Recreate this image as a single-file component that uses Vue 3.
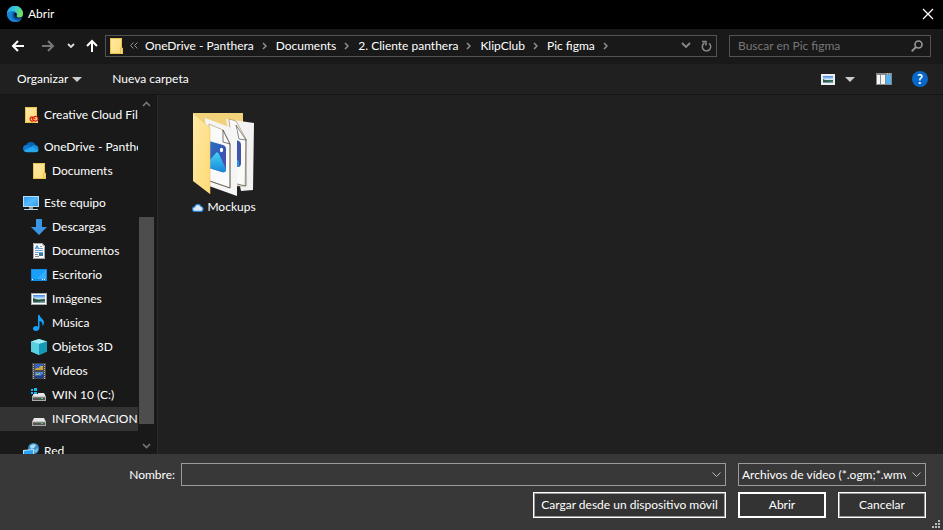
<script setup>
import { ref } from 'vue'

const crumbs = ['OneDrive - Panthera', 'Documents', '2. Cliente panthera', 'KlipClub', 'Pic figma']

const groups = [
  [{ label: 'Creative Cloud Files', icon: 'creative' }],
  [
    { label: 'OneDrive - Panthera', icon: 'onedrive' },
    { label: 'Documents', icon: 'folder', child: true },
  ],
  [
    { label: 'Este equipo', icon: 'computer' },
    { label: 'Descargas', icon: 'download', child: true },
    { label: 'Documentos', icon: 'document', child: true },
    { label: 'Escritorio', icon: 'desktop', child: true },
    { label: 'Imágenes', icon: 'picture', child: true },
    { label: 'Música', icon: 'music', child: true },
    { label: 'Objetos 3D', icon: 'cube', child: true },
    { label: 'Vídeos', icon: 'film', child: true },
    { label: 'WIN 10 (C:)', icon: 'windrive', child: true },
    { label: 'INFORMACION (D:)', icon: 'drive', child: true },
  ],
  [{ label: 'Red', icon: 'network' }],
]

const selected = ref('INFORMACION (D:)')
const fileName = ref('')
const search = ref('')
</script>

<template>
  <svg class="sprite" width="0" height="0" aria-hidden="true">
    <defs>
      <linearGradient id="gFolder" x1="0" y1="0" x2="1" y2="1">
        <stop offset="0" stop-color="#ffe9a6" /><stop offset="1" stop-color="#ffdb76" />
      </linearGradient>
      <linearGradient id="gScreen" x1="0" y1="0" x2="1" y2="1">
        <stop offset="0" stop-color="#2f9df0" /><stop offset=".5" stop-color="#55bbff" /><stop offset="1" stop-color="#2a9cf2" />
      </linearGradient>
      <linearGradient id="gSky" x1="0" y1="0" x2="0" y2="1">
        <stop offset="0" stop-color="#3f86e0" /><stop offset=".5" stop-color="#d4ecfa" /><stop offset=".62" stop-color="#39684f" /><stop offset="1" stop-color="#7fa9c4" />
      </linearGradient>
      <linearGradient id="gPhoto" x1="0" y1="0" x2="1" y2="1">
        <stop offset="0" stop-color="#2d70c8" /><stop offset=".6" stop-color="#3457b4" /><stop offset="1" stop-color="#6945a8" />
      </linearGradient>
      <linearGradient id="gHill" x1="0" y1="0" x2="0" y2="1">
        <stop offset="0" stop-color="#45d4f4" /><stop offset="1" stop-color="#1785dc" />
      </linearGradient>
      <linearGradient id="gEdgeTop" x1="0" y1="0" x2="1" y2=".4">
        <stop offset="0" stop-color="#1f9de0" /><stop offset=".5" stop-color="#35c7dd" /><stop offset="1" stop-color="#74e05c" />
      </linearGradient>
    </defs>
    <symbol id="i-folder" viewBox="0 0 16 16">
      <path d="M2 0h12v10h1v6H2z" fill="url(#gFolder)" /><path d="M2.500.5h11v9.500M2.500.5v15h12v-5.500h-2v5" fill="none" stroke="#e9c14c" />
    </symbol>
    <symbol id="i-creative" viewBox="0 0 16 16">
      <path d="M2 0h12v10h1v6H2z" fill="url(#gFolder)" /><path d="M2.500.5h11v8M2.500.5v15h10" fill="none" stroke="#e9c14c" />
      <g fill="none" stroke="#dc1c12" stroke-width="1.200"><path d="M10.500 13.800a2.200 2.200 0 1 1-1.600-4c1 0 1.800.5 3.600 2.400M8.800 12l2.200-2a2.400 2.400 0 1 1 1.800 4.200c-1.200 0-1.800-.5-3.600-2.400" /></g>
    </symbol>
    <symbol id="i-onedrive" viewBox="0 0 16 16">
      <path d="M3 7a5 5 0 0 1 9.600-.6L9 11z" fill="#0364b8" />
      <path d="M3.600 13A3.700 3.700 0 0 1 0 9.500 3.500 3.500 0 0 1 3.600 6q2 0 3.500 1L12 12z" fill="#0f78d4" />
      <path d="M8 8.500a4.200 4.200 0 0 1 5-2.200A3.500 3.500 0 0 1 13 13H9z" fill="#1490df" />
      <path d="M.8 11.600L9 7.800l6.600 3.700A3 3 0 0 1 13 13.200H3.600a3.500 3.500 0 0 1-2.800-1.600z" fill="#28a8ea" />
    </symbol>
    <symbol id="i-computer" viewBox="0 0 16 16">
      <path d="M0 1h16v11H0z" fill="#bddcf0" /><path d="M1 2h14v9H1z" fill="url(#gScreen)" />
      <path d="M6 12h4v2H6z" fill="#8da0ac" /><path d="M1 14h14v1H1z" fill="#c2d4df" />
    </symbol>
    <symbol id="i-download" viewBox="0 0 16 16">
      <path d="M5 0h6v8h5l-8 8-8-8h5z" fill="#3a96e4" />
    </symbol>
    <symbol id="i-document" viewBox="0 0 16 16">
      <path d="M2 0h9l3 3v13H2z" fill="#fafafa" /><path d="M2.500.5h8l3 3v12h-11z" fill="none" stroke="#a5a5a5" />
      <path d="M4.500 6L6 2.500 7.500 6M4.500 5h3" fill="none" stroke="#2c80c8" stroke-width=".9" />
      <path d="M9 3.500h2M8 5.500h4M4 7.500h8M4 9.500h8" stroke="#5a9ccc" fill="none" stroke-width=".9" />
      <path d="M4 11.500h3M4 13.500h4" stroke="#888" fill="none" /><path d="M8 10h4v3H8z" fill="#377c9d" />
    </symbol>
    <symbol id="i-desktop" viewBox="0 0 16 16">
      <path d="M0 2h16v12H0z" fill="#168be4" /><path d="M1 3h14v9H1z" fill="#18a0fc" /><path d="M15 3v9H6z" fill="#36aeff" /><path d="M1 12.500h2M11 12.500h4" stroke="#fff" stroke-dasharray="1 1" />
    </symbol>
    <symbol id="i-picture" viewBox="0 0 16 16">
      <path d="M0 2h16v12H0z" fill="#aaa" /><path d="M1 3h14v10H1z" fill="#fff" /><path d="M2 4h12v8H2z" fill="url(#gSky)" /><path d="M2 7l5 2 7-1v1.500L6 11l-4-.5z" fill="#28543b" />
    </symbol>
    <symbol id="i-music" viewBox="0 0 16 16">
      <path d="M7 0h1.500c.5 3 4.500 4 4.500 7.500 0 1.500-.5 2.500-1.500 3.500.5-3-1-4.500-3-5v6.500C8.500 14.500 7 16 5 16S2 15 2 13.500 3.500 11 5.200 11q1 0 1.800.5z" fill="#18a0fc" />
    </symbol>
    <symbol id="i-cube" viewBox="0 0 16 16">
      <path d="M0 2.500L8 0l8 2.500v10L8 16 0 12.500z" fill="#35b9cd" /><path d="M0 2.500L8 0l8 2.500L8 5z" fill="#a5edf5" /><path d="M0 2.500L8 5v11l-8-3.500z" fill="#5ad0df" /><path d="M8 5l8-2.500v10L8 16z" fill="#1699b6" />
    </symbol>
    <symbol id="i-film" viewBox="0 0 16 16">
      <path d="M1 0h14v16H1z" fill="#4a4a4a" /><path d="M2.500 1v15M13.500 1v15" stroke="#b9b9b9" stroke-dasharray="1 1" />
      <path d="M4 1h8v6H4z" fill="#3464c4" /><path d="M4 6l2-1h2l1-2h3v4H4z" fill="#c8a23a" /><path d="M4 9h8v6H4z" fill="#4586dd" /><path d="M4 13l3-1 2 1 3-2v4H4z" fill="#1b3d96" /><path d="M5 11l2 1 2-2" fill="none" stroke="#e5c153" />
    </symbol>
    <symbol id="i-drive" viewBox="0 0 16 16">
      <path d="M3 7h10l2 4H1z" fill="#e6e6e6" /><path d="M1 10.500h14V15H1z" fill="#aaa" /><path d="M2 11.500h12V14H2z" fill="#555" /><path d="M10 12h2v1h-2z" fill="#36df58" />
    </symbol>
    <symbol id="i-windrive" viewBox="0 0 16 16">
      <path d="M3 6h10l2 4H1z" fill="#e6e6e6" /><path d="M1 9.500h14V14H1z" fill="#aaa" /><path d="M2 10.500h12V13H2z" fill="#555" /><path d="M10 11h2v1h-2z" fill="#36df58" />
      <path d="M0 1h7v6H0z" fill="#191919" /><path d="M0 2h2v2H0zM3 1h3v3H3zM0 5h2v2H0zM3 5h3v2H3z" fill="#10b7f3" />
    </symbol>
    <symbol id="i-network" viewBox="0 0 16 16">
      <circle cx="10.500" cy="5.500" r="5.500" fill="#3d91c9" /><path d="M7 3q3-3 6-1l-2 3-3 1z" fill="#a9def5" /><path d="M11 7l4-2q0 4-3 5z" fill="#75bddf" />
      <path d="M0 7l11-1v7L0 13z" fill="#b9e3fa" /><path d="M1 8l9-1v6H1z" fill="#2ba1f5" />
    </symbol>
  </svg>

  <main class="dialog">
    <header class="titlebar">
      <svg class="edge" viewBox="0 0 16 16" aria-hidden="true">
        <circle cx="8" cy="8" r="8" fill="#0f69bd" />
        <path d="M0 8a8 8 0 0 1 16-.5c0 3-2 4-4 4-2.500 0-3-.8-2.300-1.800C10.500 8 9 5.300 6 5.300 3 5.300.8 6.800 0 8z" fill="url(#gEdgeTop)" />
        <path d="M6 5.500C3.500 7.500 4.500 14 10 14.500c2 .2 3.800-.7 5-2-1.500 2.500-4 3.500-7 3.500-4 0-8-3.500-8-8 1.500-2.500 4-3 6-2.500z" fill="#1583d6" />
        <path d="M6.500 7C4.800 9.500 6.200 14 10.500 14c2 0 3.500-.8 4.300-2-3.800 1-7.300-1-8.300-5z" fill="#104a92" />
        <path d="M7 7.500Q8.500 6 9.800 8q.2 1-.4 2 .3 1.500 2.600 1.700 2 0 3.300-1.200-.3 1-.8 1.500Q8 13.500 7 7.500z" fill="#06131f" />
      </svg>
      <h1>Abrir</h1>
      <button class="close" type="button" aria-label="Cerrar">
        <svg width="12" height="12" viewBox="0 0 12 12"><path d="M1 1l10 10M11 1L1 11" stroke="#fff" stroke-width="1.300" /></svg>
      </button>
    </header>

    <div class="navbar">
      <div class="history">
        <button type="button" aria-label="Atrás"><svg width="14" height="12" viewBox="0 0 14 12"><path d="M13 6H2M7 1L2 6l5 5" fill="none" stroke="#fff" stroke-width="2" /></svg></button>
        <button type="button" aria-label="Adelante"><svg width="14" height="12" viewBox="0 0 14 12"><path d="M1 6h11M7 1l5 5-5 5" fill="none" stroke="#777" stroke-width="2" /></svg></button>
        <button class="recent" type="button" aria-label="Ubicaciones recientes"><svg width="8" height="6" viewBox="0 0 8 6"><path d="M1 1l3 3 3-3" fill="none" stroke="#ddd" stroke-width="1.800" /></svg></button>
        <button class="up" type="button" aria-label="Subir"><svg width="12" height="14" viewBox="0 0 12 14"><path d="M6 13V2M1 7l5-5 5 5" fill="none" stroke="#fff" stroke-width="2" /></svg></button>
      </div>
      <nav class="address" aria-label="Ruta">
        <svg class="icon" aria-hidden="true"><use href="#i-folder" /></svg>
        <svg class="more" width="8" height="7" viewBox="0 0 8 7" aria-hidden="true"><path d="M3.500.5l-3 3 3 3M7.500.5l-3 3 3 3" fill="none" stroke="#909090" /></svg>
        <template v-for="crumb in crumbs" :key="crumb">
          <a href="#">{{ crumb }}</a>
          <svg class="sep" width="5" height="8" viewBox="0 0 5 8" aria-hidden="true"><path d="M1 1l3 3-3 3" fill="none" stroke="#909090" stroke-width="1.500" /></svg>
        </template>
        <button class="push" type="button" aria-label="Ubicaciones anteriores"><svg width="10" height="7" viewBox="0 0 10 7"><path d="M1 1l4 4 4-4" fill="none" stroke="#888" stroke-width="1.800" /></svg></button>
        <button type="button" aria-label="Actualizar"><svg width="11" height="12" viewBox="0 0 11 12"><path d="M8 3.300a4.200 4.200 0 1 1-4.500-.3M1 1.500h4v4" fill="none" stroke="#888" stroke-width="1.500" /></svg></button>
      </nav>
      <label class="search">
        <input v-model="search" type="search" placeholder="Buscar en Pic figma" aria-label="Buscar en Pic figma" />
        <svg width="12" height="12" viewBox="0 0 12 12" aria-hidden="true"><circle cx="7.500" cy="4.500" r="3.500" fill="none" stroke="#999" stroke-width="1.600" /><path d="M5 7L.7 11.300" stroke="#999" stroke-width="1.800" /></svg>
      </label>
    </div>

    <div class="toolbar">
      <button type="button">Organizar <span class="caret"></span></button>
      <button class="new" type="button">Nueva carpeta</button>
      <button class="views" type="button" aria-label="Cambiar la vista">
        <svg width="14" height="11" viewBox="0 0 14 11"><path d="M0 0h14v11H0z" fill="#eee" /><path d="M2 2h10v7H2z" fill="url(#gSky)" /><path d="M2 5l4 2 6-1v1L6 8H2z" fill="#2c5b48" /></svg>
        <span class="caret"></span>
      </button>
      <button class="pane" type="button" aria-label="Panel de vista previa">
        <svg width="16" height="12" viewBox="0 0 16 12"><path d="M0 0h16v12H0z" fill="#84898d" /><path d="M1 2h3v9H1zM5 2h4v9H5z" fill="#f5f5f5" /><path d="M10 2h5v9h-5z" fill="#55b0f2" /><path d="M11 1h1M13 1h1" stroke="#ddd" /></svg>
      </button>
      <button class="help" type="button" aria-label="Ayuda">?</button>
    </div>

    <section class="body">
      <aside class="sidebar">
        <nav class="tree" aria-label="Panel de navegación">
          <ul v-for="(group, i) in groups" :key="i">
            <li v-for="item in group" :key="item.label">
              <a href="#" :class="{ child: item.child, selected: item.label === selected }" @click.prevent="selected = item.label">
                <svg class="icon" aria-hidden="true"><use :href="'#i-' + item.icon" /></svg>
                <span>{{ item.label }}</span>
              </a>
            </li>
          </ul>
        </nav>
        <div class="scrollbar" aria-hidden="true">
          <svg width="9" height="6" viewBox="0 0 9 6"><path d="M1 5l3.500-3.500L8 5" fill="none" stroke="#777" stroke-width="1.600" /></svg>
          <div class="track"><div class="before"></div><div class="thumb"></div><div class="after"></div></div>
          <svg width="9" height="6" viewBox="0 0 9 6"><path d="M1 1l3.500 3.500L8 1" fill="none" stroke="#777" stroke-width="1.600" /></svg>
        </div>
      </aside>
      <div class="files">
        <a class="file" href="#">
          <svg width="64" height="84" viewBox="0 0 64 84" aria-hidden="true">
            <path d="M1 1h50v60H1z" fill="#f3d27c" />
            <path d="M34 7l28 4-1 67-12 1z" fill="#f2f2f3" />
            <path d="M37 7l7 2 10 18-1 47H44z" fill="#fafafa" stroke="#a98f62" stroke-width=".7" />
            <path d="M54 28l-7-1-3-14zM54 27v47l-9-2" fill="none" stroke="#555" stroke-width=".7" />
            <path d="M44 28l3 1q2 1 2 4v18q0 4-3 4h-3z" fill="#4052a9" /><path d="M44 47l3 2v6l-4-1z" fill="#2495df" />
            <path d="M13 6l32 12v66L17 74z" fill="#f5f5f6" />
            <path d="M17 12l14 6 7 14v44L17 69z" fill="#fafafa" stroke="#b89c6b" stroke-width=".7" />
            <path d="M31 18v12l7 2zM38 32v44l-20-7" fill="none" stroke="#444" stroke-width=".7" />
            <path d="M17 29l14 4q3 1 3 4v20q0 4-4 3l-13-4z" fill="url(#gPhoto)" /><path d="M17 49l7-8q1-2 3 1l7 15q0 4-4 3l-13-4z" fill="url(#gHill)" /><ellipse cx="29.500" cy="38" rx="1.600" ry="2.300" fill="#fff" />
            <path d="M1 1l17 15v66L1 69z" fill="url(#gFolder)" /><path d="M1 1l17 15v66" fill="none" stroke="#e8c571" stroke-width=".6" />
          </svg>
          <span class="caption">
            <svg width="12" height="9" viewBox="0 0 12 9" aria-hidden="true"><path d="M3 8.400a2.300 2.300 0 0 1-.3-4.600 3.300 3.300 0 0 1 6.300-.3 2.500 2.500 0 0 1 .2 4.900z" fill="#dceaf8" stroke="#2681d5" stroke-width="1.200" /></svg>
            Mockups
          </span>
        </a>
      </div>
    </section>

    <footer class="footer">
      <label class="name-label" for="file-name">Nombre:</label>
      <div class="field">
        <input id="file-name" v-model="fileName" type="text" />
        <svg width="9" height="6" viewBox="0 0 9 6" aria-hidden="true"><path d="M.5.5l4 4 4-4" fill="none" stroke="#bbb" /></svg>
      </div>
      <div class="field type">
        <select aria-label="Tipo de archivo"><option>Archivos de vídeo (*.ogm;*.wmv;*.mpg)</option></select>
        <svg width="9" height="6" viewBox="0 0 9 6" aria-hidden="true"><path d="M.5.5l4 4 4-4" fill="none" stroke="#bbb" /></svg>
      </div>
      <button class="btn mobile" type="button">Cargar desde un dispositivo móvil</button>
      <div class="actions">
        <button class="btn primary" type="button">Abrir</button>
        <button class="btn" type="button">Cancelar</button>
      </div>
      <svg class="grip" width="8" height="8" viewBox="0 0 8 8" aria-hidden="true"><path d="M6 0h2v2H6zM3 3h2v2H3zM6 3h2v2H6zM0 6h2v2H0zM3 6h2v2H3zM6 6h2v2H6z" fill="#bbb" /></svg>
    </footer>
  </main>
</template>

<style>
body { margin: 0; background: #202020; }
</style>

<style scoped>
.sprite { position: absolute; }
.dialog {
  display: flex;
  flex-direction: column;
  height: 100vh;
  color: #fff;
  background: #202020;
  font: 12px/16px Lato, "Open Sans", sans-serif;
}
.dialog * { box-sizing: border-box; }
button, input, select { font: inherit; color: inherit; margin: 0; padding: 0; border: 0; background: none; border-radius: 0; white-space: nowrap; }
input, select { outline: 0; min-width: 0; appearance: none; }
a { color: inherit; text-decoration: none; white-space: nowrap; }
svg { display: block; flex: none; }
.icon { width: 16px; height: 16px; }

.titlebar { display: flex; align-items: center; height: 29px; padding: 0 8px 2px 7px; background: #000; flex: none; }
.edge { width: 16px; height: 16px; }
h1 { margin: 0; padding-left: 5px; font-size: 12px; font-weight: 400; }
.close { margin-left: auto; }
.close svg { width: 14px; }

.navbar { display: flex; align-items: center; height: 35px; padding: 0 12px 2px 11px; background: #191919; flex: none; }
.history { display: flex; align-items: center; width: 94px; }
.history button + button { margin-left: 16px; }
.history .recent { margin-left: 12px; }
.history .recent + .up { margin-left: 11px; }
.address { display: flex; align-items: center; flex: 1; height: 22px; min-width: 0; border: 1px solid #535353; padding: 0 4px 0 2px; }
.more { margin: 0 7px 0 6px; }
.sep { margin: 0 9px 0 8px; }
.push { margin: 0 10px 0 auto; }
.search { display: flex; align-items: center; width: 202px; height: 22px; margin-left: 12px; padding: 0 7px 0 8px; border: 1px solid #535353; }
.search input { flex: 1; }
.search input::placeholder { color: #777; opacity: 1; }

.toolbar { display: flex; align-items: center; height: 31px; padding: 0 15px 0 17px; border-bottom: 1px solid #151515; background: #202020; flex: none; }
.toolbar button { display: flex; align-items: center; gap: 4px; }
.caret { border: 5px solid transparent; border-top: 5px solid #ccc; border-bottom: 0; }
.toolbar .new { margin-left: 30px; }
.toolbar .views { margin-left: auto; gap: 10px; }
.toolbar .pane { margin: 0 20px 0 21px; }
.toolbar .help { justify-content: center; width: 16px; height: 16px; border-radius: 50%; background: #0868c9; font-weight: 700; font-size: 13px; }

.body { display: flex; flex: 1; min-height: 0; }
.sidebar { display: flex; flex: none; width: 158px; background: #191919; border-right: 1px solid #2b2b2b; overflow: hidden; }
.tree { width: 138px; padding-top: 8px; overflow: hidden; }
ul { list-style: none; margin: 0 0 8px; padding: 0; }
.tree a { display: flex; align-items: center; gap: 5px; height: 24px; padding-left: 23px; overflow: hidden; }
.tree a.child { padding-left: 31px; }
.tree a.selected { background: #333; }
.scrollbar { display: flex; flex-direction: column; align-items: center; width: 15px; margin-left: 1px; padding: 6px 0 5px; }
.track { display: flex; flex-direction: column; flex: 1; width: 100%; padding: 5px 0; }
.before { flex: 105; }
.thumb { flex: 206; background: #4d4d4d; }
.after { flex: 14; }

.files { flex: 1; padding: 17px 34px; }
.file { display: inline-flex; flex-direction: column; align-items: center; gap: 3px; }
.caption { display: flex; align-items: center; gap: 3px; }

.footer {
  position: relative;
  display: grid;
  grid-template-columns: 175px 1fr 188px;
  gap: 6px 0;
  align-items: start;
  padding: 9px 17px 12px 0;
  background: #383838;
  flex: none;
}
.name-label { text-align: right; padding-top: 4px; }
.field { display: flex; align-items: center; height: 23px; margin: 0 12px 0 6px; padding-right: 4px; border: 1px solid #9b9b9b; }
.field input { flex: 1; padding: 0 3px; height: 100%; }
.field.type { margin: 0; padding-left: 3px; }
.field select { flex: 1; height: 100%; margin-right: 6px; overflow: hidden; text-overflow: clip; }
.btn { height: 26px; background: #333; border: 1px solid #fff; outline: 1px solid #999; outline-offset: -2px; }
.btn.primary { border-width: 2px; outline: 0; }
.btn.mobile { grid-column: 1 / 3; justify-self: end; width: 193px; margin-right: 12px; }
.actions { display: grid; grid-template-columns: 1fr 1fr; gap: 12px; }
.grip { position: absolute; right: 3px; bottom: 2px; }
</style>
